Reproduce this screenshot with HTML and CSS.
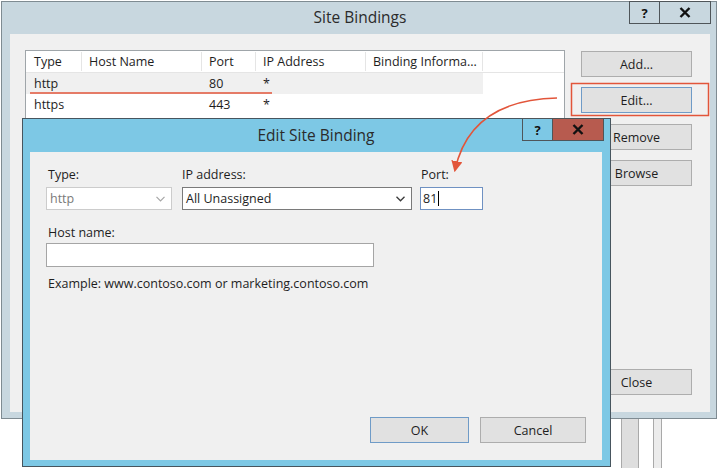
FILE: index.html
```html
<!DOCTYPE html>
<html lang="en">
<head>
<meta charset="utf-8">
<title>Site Bindings</title>
<link rel="stylesheet" href="styles.css">
</head>
<body>
<div class="desk">
  <div class="behind">
    <span class="post wide"></span>
    <span class="post narrow"></span>
  </div>

  <section class="win site">
    <header class="titlebar">
      <span class="title">Site Bindings</span>
      <div class="caption-btns">
        <span class="cbtn help">?</span>
        <span class="cbtn close">
          <svg width="12" height="11" viewBox="0 0 12 11"><path d="M1.5 1 L10.5 10 M10.5 1 L1.5 10" stroke="#111" stroke-width="2.4" fill="none"/></svg>
        </span>
      </div>
    </header>
    <div class="client site-client">
      <div class="listview">
        <div class="lv-row lv-head">
          <span class="col c-type">Type</span>
          <span class="col c-host">Host Name</span>
          <span class="col c-port">Port</span>
          <span class="col c-ip">IP Address</span>
          <span class="col c-info">Binding Informa...</span>
        </div>
        <div class="lv-row sel">
          <span class="col c-type">http</span>
          <span class="col c-host"></span>
          <span class="col c-port">80</span>
          <span class="col c-ip">*</span>
          <span class="col c-info"></span>
        </div>
        <div class="lv-row">
          <span class="col c-type">https</span>
          <span class="col c-host"></span>
          <span class="col c-port">443</span>
          <span class="col c-ip">*</span>
          <span class="col c-info"></span>
        </div>
      </div>
      <div class="btn-col">
        <button class="btn">Add...</button>
        <button class="btn focus">Edit...</button>
        <button class="btn">Remove</button>
        <button class="btn">Browse</button>
        <button class="btn close-btn">Close</button>
      </div>
    </div>
  </section>

  <section class="win dlg">
    <header class="titlebar dlg-title">
      <span class="title">Edit Site Binding</span>
      <div class="caption-btns">
        <span class="cbtn help">?</span>
        <span class="cbtn close red">
          <svg width="12" height="11" viewBox="0 0 12 11"><path d="M1.5 1 L10.5 10 M10.5 1 L1.5 10" stroke="#111" stroke-width="2.4" fill="none"/></svg>
        </span>
      </div>
    </header>
    <div class="client dlg-client">
      <div class="field-row">
        <div class="field f-type">
          <label class="lbl">Type:</label>
          <div class="box combo disabled">
            <span class="val">http</span>
            <svg class="chev" width="9" height="6" viewBox="0 0 9 6"><path d="M0.5 0.8 L4.5 4.8 L8.5 0.8" stroke="#a6a6a6" stroke-width="1.2" fill="none"/></svg>
          </div>
        </div>
        <div class="field f-ip">
          <label class="lbl">IP address:</label>
          <div class="box combo">
            <span class="val">All Unassigned</span>
            <svg class="chev" width="9" height="6" viewBox="0 0 9 6"><path d="M0.5 0.8 L4.5 4.8 L8.5 0.8" stroke="#3a3a3a" stroke-width="1.3" fill="none"/></svg>
          </div>
        </div>
        <div class="field f-port">
          <label class="lbl">Port:</label>
          <div class="box text focus"><span class="val">81</span><span class="caret"></span></div>
        </div>
      </div>
      <div class="field f-host">
        <label class="lbl">Host name:</label>
        <div class="box text plain"></div>
      </div>
      <p class="example">Example: www.contoso.com or marketing.contoso.com</p>
      <div class="actions">
        <button class="btn ok focus">OK</button>
        <button class="btn cancel">Cancel</button>
      </div>
    </div>
  </section>

  <svg class="marks" width="719" height="468" viewBox="0 0 719 468">
    <defs>
      <marker id="head" viewBox="0 0 10 10" refX="8" refY="5" markerWidth="7" markerHeight="7" orient="auto">
        <path d="M0 0 L10 5 L0 10 Z" fill="#e2553a"/>
      </marker>
    </defs>
    <line x1="30" y1="93" x2="272" y2="93" stroke="#e2553a" stroke-width="1.6"/>
    <rect x="571.5" y="83.5" width="137" height="32" fill="none" stroke="#e2553a" stroke-width="1.5"/>
    <path d="M557 98 Q 470 100 455 170" fill="none" stroke="#e2553a" stroke-width="1.6" marker-end="url(#head)"/>
  </svg>
</div>
</body>
</html>
```

FILE: styles.css
```css
* { box-sizing: border-box; }

html, body {
  margin: 0;
  padding: 0;
  background: #ffffff;
}

body {
  width: 719px;
  height: 468px;
  overflow: hidden;
  font-family: "Open Sans", "Noto Sans", sans-serif;
  font-size: 12.5px;
  color: #1e1e1e;
}

.desk {
  position: relative;
  width: 719px;
  height: 468px;
}

/* things on the desktop behind the windows */
.behind {
  position: absolute;
  left: 621px;
  top: 410px;
  display: flex;
  gap: 14px;
}
.post {
  height: 60px;
  background: #dedede;
  border-left: 1px solid #a9a9a9;
  border-right: 1px solid #a9a9a9;
}
.post.wide { width: 18px; }
.post.narrow { width: 9px; background: #ececec; }

/* window chrome */
.win {
  position: absolute;
  display: flex;
  flex-direction: column;
}

.site {
  left: 1px;
  top: 1px;
  width: 716px;
  height: 418px;
  background: #c8d7df;
  border: 1px solid #7f8b92;
  padding: 0 6px 6px 8px;
}

.dlg {
  left: 22px;
  top: 118px;
  width: 589px;
  height: 349px;
  background: #7dc8e5;
  border: 1px solid #47555e;
  padding: 0 8px 6px 7px;
}

.titlebar {
  position: relative;
  height: 32px;
  flex: none;
  display: flex;
  align-items: center;
  justify-content: center;
  padding-bottom: 2px;
}
.dlg-title { height: 33px; }

.title {
  font-size: 15.5px;
  color: #2b2b2b;
}

.caption-btns {
  position: absolute;
  top: -1px;
  display: flex;
}
.site .caption-btns { right: -1px; }
.dlg .caption-btns { right: -2px; }

.cbtn {
  height: 23px;
  border: 1px solid #4f5559;
  display: flex;
  align-items: center;
  justify-content: center;
  font-weight: 700;
  font-size: 13px;
  color: #111;
}
.cbtn.help { width: 31px; }
.cbtn.close { width: 52px; margin-left: -1px; }
.cbtn.red { background: #b75b4f; }

.client {
  flex: 1;
  background: #f0f0f0;
}

/* Site Bindings body */
.site-client {
  display: flex;
  gap: 16px;
  padding: 16px 18px 17px 15px;
}

.listview {
  width: 540px;
  height: 300px;
  background: #ffffff;
  border: 1px solid #9fa5a9;
  align-self: flex-start;
}

.lv-row {
  display: flex;
  height: 21px;
  align-items: center;
}
.lv-head {
  height: 22px;
  border-bottom: 1px solid #e5e5e5;
}
.lv-row.sel .col { background: #f0f0f0; }

.col {
  height: 100%;
  display: flex;
  align-items: center;
  padding-left: 7px;
  white-space: nowrap;
}
.lv-head .col {
  height: 19px;
  border-right: 1px solid #e5e5e5;
}
.c-type { width: 56px; padding-left: 8px; }
.c-host { width: 120px; }
.c-port { width: 54px; }
.c-ip { width: 110px; }
.c-info { width: 117px; }

.btn-col {
  width: 111px;
  display: flex;
  flex-direction: column;
  padding-top: 1px;
}
.btn-col .btn + .btn { margin-top: 10px; }
.btn-col .btn:nth-child(3) { margin-top: 11px; }
.btn-col .btn.close-btn { margin-top: auto; }

.btn {
  height: 26px;
  flex: none;
  background: #e1e1e1;
  border: 1px solid #adadad;
  font-family: inherit;
  font-size: 12.5px;
  color: #1e1e1e;
  padding: 0;
  text-align: center;
}
.btn.focus { border-color: #6f9bc7; }

/* Edit Site Binding body */
.dlg-client {
  display: flex;
  flex-direction: column;
  padding: 15px 16px 17px 16px;
}

.field-row { display: flex; }

.field { display: flex; flex-direction: column; }
.f-type { width: 126px; margin-right: 10px; }
.f-ip { width: 230px; margin-right: 8px; }
.f-port { width: 63px; }
.f-host { width: 328px; margin-top: 15px; }

.lbl {
  line-height: 16px;
  padding-left: 2px;
  margin-bottom: 4px;
  color: #1e1e1e;
}
.f-ip .lbl { padding-left: 0; }
.f-port .lbl { padding-left: 1px; }
.f-host .lbl { margin-bottom: 2px; }

.box {
  height: 23px;
  background: #ffffff;
  border: 1px solid #7a7a7a;
  display: flex;
  align-items: center;
  padding-left: 3px;
}
.box.disabled { border-color: #cccccc; color: #7a7a7a; }
.box.focus { border-color: #6f91c2; padding-left: 2px; }
.box.plain { height: 24px; border-color: #a5a5a5; }

.combo { justify-content: space-between; padding-right: 6px; }
.val { white-space: nowrap; }

.caret {
  width: 1px;
  height: 15px;
  background: #000;
  margin-left: 1px;
}

.example {
  margin: 9px 0 0 2px;
  line-height: 16px;
}

.actions {
  margin-top: auto;
  display: flex;
  justify-content: flex-end;
  gap: 11px;
}
.ok { width: 99px; }
.cancel { width: 106px; }

.marks {
  position: absolute;
  left: 0;
  top: 0;
  pointer-events: none;
}
```
